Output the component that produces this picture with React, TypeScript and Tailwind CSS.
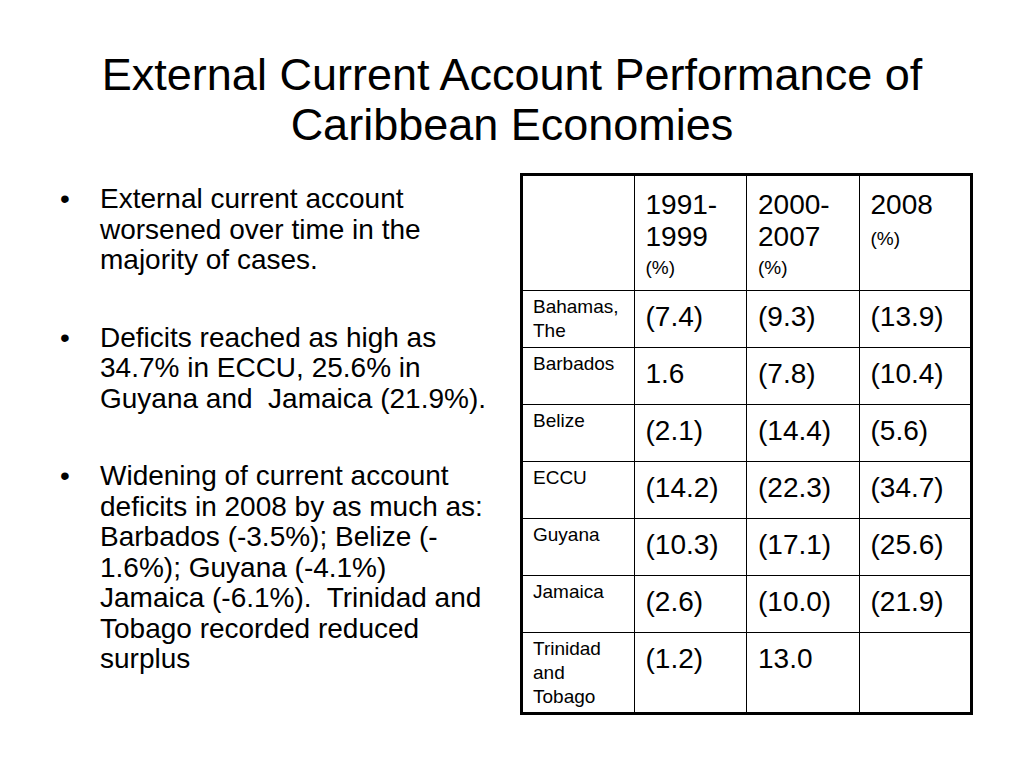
const rows: { label: string[]; a: string; b: string; c: string }[] = [
  { label: ["Bahamas,", "The"], a: "(7.4)", b: "(9.3)", c: "(13.9)" },
  { label: ["Barbados"], a: "1.6", b: "(7.8)", c: "(10.4)" },
  { label: ["Belize"], a: "(2.1)", b: "(14.4)", c: "(5.6)" },
  { label: ["ECCU"], a: "(14.2)", b: "(22.3)", c: "(34.7)" },
  { label: ["Guyana"], a: "(10.3)", b: "(17.1)", c: "(25.6)" },
  { label: ["Jamaica"], a: "(2.6)", b: "(10.0)", c: "(21.9)" },
  { label: ["Trinidad", "and", "Tobago"], a: "(1.2)", b: "13.0", c: "" },
]

// zero-width space after "(-" so the line can break there, as on the slide
const bullets = [
  "External current account worsened over time in the majority of cases.",
  "Deficits reached as high as 34.7% in ECCU, 25.6% in Guyana and\u00a0 Jamaica (21.9%).",
  "Widening of current account deficits in 2008 by as much as: Barbados (-3.5%); Belize (-\u200b1.6%); Guyana (-4.1%) Jamaica (-6.1%).\u00a0 Trinidad and Tobago recorded reduced surplus",
]

function HeadCell({ top, pctGap }: { top: string[]; pctGap: string }) {
  return (
    <td className="border border-black px-[11px] pt-[13px] align-top">
      {top.map((t) => (
        <div key={t} className="text-[28px] leading-[32px]">
          {t}
        </div>
      ))}
      <div className={`${pctGap} text-[19px] leading-[24px]`}>(%)</div>
    </td>
  )
}

export default function App() {
  return (
    <div
      className="h-[768px] w-[1024px] overflow-hidden bg-white text-black"
      style={{ fontFamily: '"Liberation Sans", Arial, sans-serif' }}
    >
      <h1 className="pt-[50px] text-center text-[45px] leading-[50px]">
        External Current Account Performance of
        <br />
        Caribbean Economies
      </h1>

      <div className="mt-[31px] flex">
        <ul className="ml-[60px] mt-[3px] w-[433px] text-[28px] leading-[30.5px]">
          {bullets.map((b) => (
            <li key={b} className="mb-[47px] flex">
              <span className="w-[40px] shrink-0">•</span>
              <span>{b}</span>
            </li>
          ))}
        </ul>

        <table className="ml-[27px] mt-[-8px] h-fit w-[453px] table-fixed border-collapse border-[3px] border-black">
          <tbody>
            <tr className="h-[116px]">
              <td className="border border-black" />
              <HeadCell top={["1991-", "1999"]} pctGap="mt-[3px]" />
              <HeadCell top={["2000-", "2007"]} pctGap="mt-[3px]" />
              <HeadCell top={["2008"]} pctGap="mt-[6px]" />
            </tr>
            {rows.map((r) => (
              <tr key={r.label.join(" ")} className={r.label.length === 3 ? "h-[81px]" : "h-[57px]"}>
                <td className="border border-black pl-[10px] pr-0 pt-[4px] align-top text-[19px] leading-[24px]">
                  {r.label.map((l) => (
                    <div key={l}>{l}</div>
                  ))}
                </td>
                {[r.a, r.b, r.c].map((v, i) => (
                  <td key={i} className="border border-black px-[11px] pt-[10px] align-top text-[28px] leading-[32px]">
                    {v}
                  </td>
                ))}
              </tr>
            ))}
          </tbody>
        </table>
      </div>
    </div>
  )
}
